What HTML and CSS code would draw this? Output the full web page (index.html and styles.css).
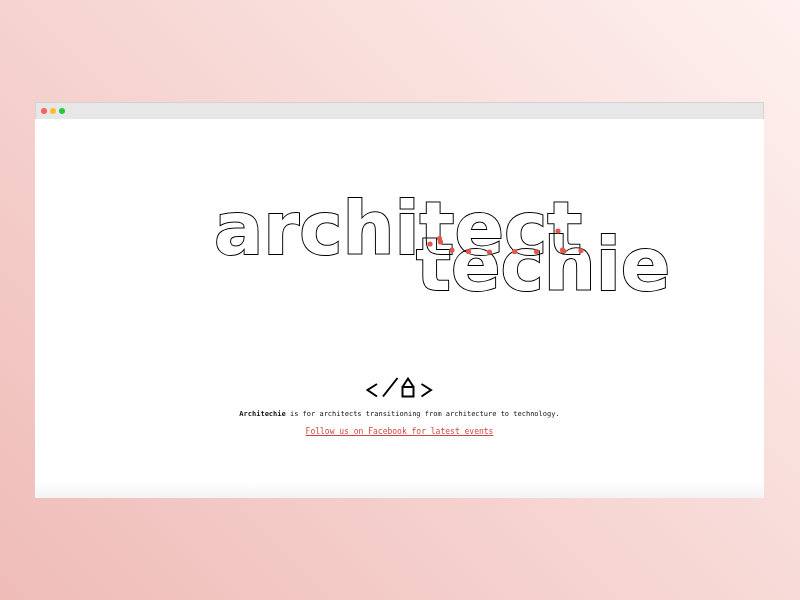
FILE: index.html
```html
<!DOCTYPE html>
<html lang="en">
<head>
<meta charset="utf-8">
<meta name="viewport" content="width=device-width, initial-scale=1">
<title>Architechie</title>
<link rel="stylesheet" href="styles.css">
</head>
<body>
<div class="window">
  <div class="titlebar">
    <span class="light light-close"></span>
    <span class="light light-minimize"></span>
    <span class="light light-zoom"></span>
  </div>
  <main class="page">
    <h1 class="hero">
      <svg class="wordmark" viewBox="35 185 729 115" role="img" aria-label="architect techie">
        <text class="word" x="214" y="254">architect</text>
        <text class="word" x="416" y="290">techie</text>
        <g class="nodes">
          <circle cx="430" cy="244" r="2.6"/>
          <circle cx="439.500" cy="238.500" r="2.6"/>
          <circle cx="440.500" cy="242" r="2.6"/>
          <circle cx="452" cy="250" r="2.6"/>
          <circle cx="468.500" cy="251.500" r="2.6"/>
          <circle cx="489.500" cy="252" r="2.6"/>
          <circle cx="514.500" cy="251.500" r="2.6"/>
          <circle cx="536.500" cy="251.500" r="2.6"/>
          <circle cx="558" cy="231" r="2.6"/>
          <circle cx="562.500" cy="250" r="2.6"/>
          <circle cx="563.500" cy="251" r="2.6"/>
          <circle cx="581" cy="250.500" r="2.6"/>
        </g>
      </svg>
    </h1>
    <svg class="emblem" viewBox="366 376 67 23" aria-hidden="true">
      <path d="M377 384 367.500 390l9.500 6.500M383 396.500 397.500 378M402.500 387v9.500h11V387zM402.500 387l5.500-8.500 5.500 8.500M421.500 384l9.500 6-9.500 6.500"/>
    </svg>
    <p class="intro"><strong>Architechie</strong> is for architects transitioning from architecture to technology.</p>
    <a class="follow" href="#">Follow us on Facebook for latest events</a>
  </main>
</div>
</body>
</html>
```

FILE: styles.css
```css
* {
  box-sizing: border-box;
}

body {
  margin: 0;
  min-height: 100vh;
  padding: 35px 36px 35px 35px;
  display: flex;
  align-items: center;
  background: linear-gradient(45deg, #efbcb8, #fef1ef);
  font-family: "DejaVu Sans Mono", monospace;
  color: #111;
}

.window {
  flex: 1;
  min-width: 0;
}

.titlebar {
  display: flex;
  align-items: center;
  gap: 3px;
  height: 17px;
  padding: 0 5px;
  background: #e7e7e7;
  border: 1px solid #d3d3d3;
  border-bottom: 0;
}

.light {
  width: 6px;
  height: 6px;
  border-radius: 50%;
}

.light-close {
  background: #ff5f57;
}

.light-minimize {
  background: #ffbd2e;
}

.light-zoom {
  background: #28c840;
}

.page {
  display: flex;
  flex-direction: column;
  align-items: center;
  padding: 66px 0 60px;
  background: linear-gradient(to top, #f3f3f3, #fff 16px);
}

.hero {
  width: 100%;
  margin: 0 0 76px;
}

.wordmark {
  display: block;
  width: 100%;
}

.word {
  font-family: "DejaVu Sans", sans-serif;
  font-size: 73px;
  font-weight: 700;
  fill: #fff;
  stroke: #000;
  stroke-width: 2px;
  paint-order: stroke;
  mix-blend-mode: multiply;
}

.nodes {
  fill: #e2574c;
}

.emblem {
  width: 67px;
  height: 23px;
  fill: none;
  stroke: #000;
  stroke-width: 2;
}

.intro {
  margin: 9px 0 6px;
  font-size: 7px;
  line-height: 12px;
  text-align: center;
}

.follow {
  color: #d0453d;
  font-size: 8px;
  line-height: 12px;
  text-decoration: underline;
}
```
